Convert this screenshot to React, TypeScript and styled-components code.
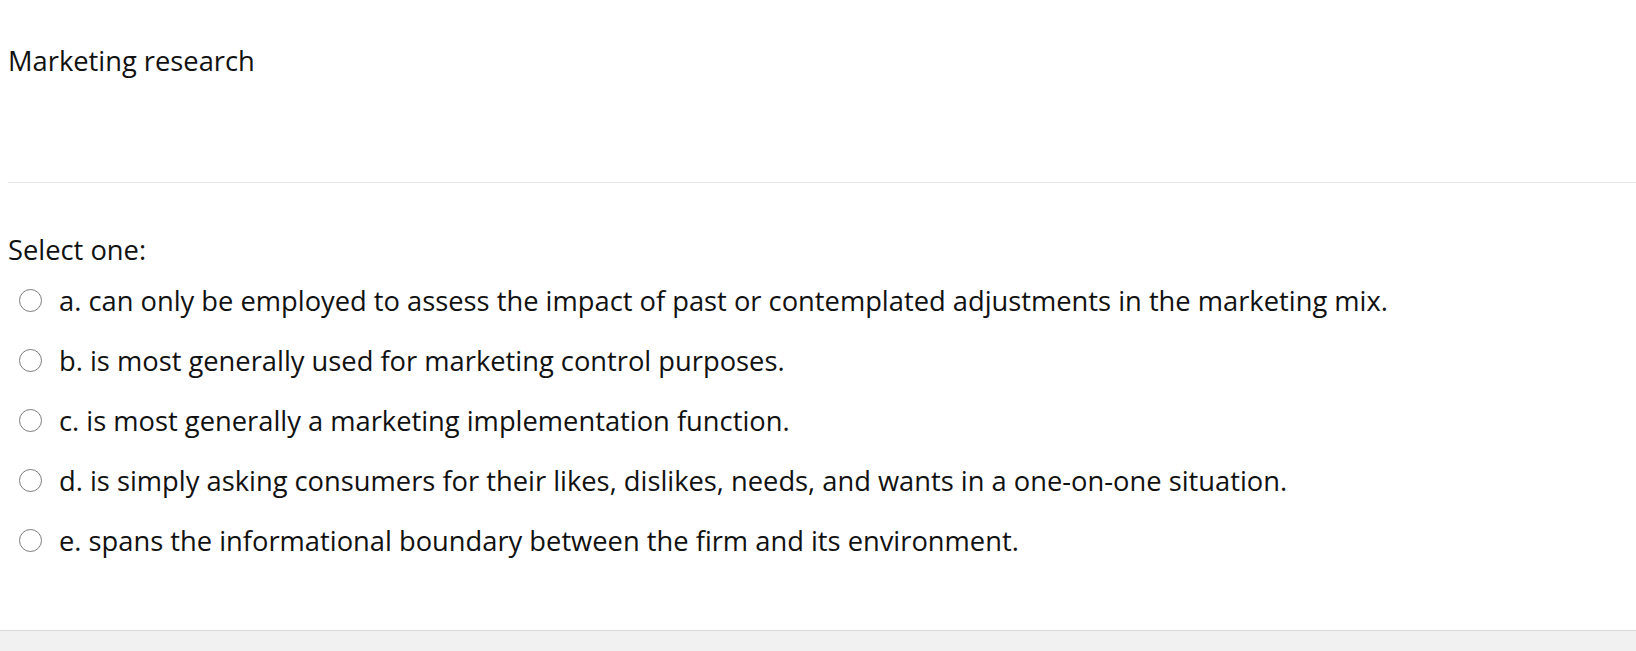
import React from "react";
import styled, { createGlobalStyle } from "styled-components";

const GlobalStyle = createGlobalStyle`
  html, body {
    margin: 0;
    padding: 0;
    background: #f1f1f1;
  }
  body {
    font-family: "Open Sans", "Noto Sans", sans-serif;
    color: #111;
  }
`;

const Page = styled.div`
  display: flex;
  flex-direction: column;
  min-height: 651px;
`;

const Card = styled.main`
  background: #fff;
  height: 631px;
  padding-left: 8px;
  box-sizing: border-box;
  border-bottom: 1px solid #dadada;
`;

const QuestionText = styled.div`
  font-size: 27.3px;
  line-height: 40.8px;
  padding-top: 41px;
  height: 183px;
  box-sizing: border-box;
  border-bottom: 1px solid #e8e8e8;
`;

const Answer = styled.fieldset`
  border: 0;
  margin: 0;
  padding: 47px 0 0;
  font-size: 27.3px;
  line-height: 40.8px;
`;

const Prompt = styled.legend`
  padding: 0;
  float: left;
  width: 100%;
  height: 40.8px;
  margin-bottom: 10.2px;
`;

const Options = styled.div`
  clear: both;
  display: flex;
  flex-direction: column;
  gap: 19.2px;
`;

const Option = styled.label`
  display: flex;
  align-items: center;
  height: 40.8px;
  cursor: pointer;
`;

const Radio = styled.span`
  width: 23px;
  height: 23px;
  box-sizing: border-box;
  border: 1.5px solid #7d7d7d;
  border-radius: 50%;
  background: #fff;
  margin: 0 17px 2px 11px;
  flex-shrink: 0;
`;

const Footer = styled.footer`
  flex: 1;
  background: #f1f1f1;
`;

const options = [
  "a. can only be employed to assess the impact of past or contemplated adjustments in the marketing mix.",
  "b. is most generally used for marketing control purposes.",
  "c. is most generally a marketing implementation function.",
  "d. is simply asking consumers for their likes, dislikes, needs, and wants in a one-on-one situation.",
  "e. spans the informational boundary between the firm and its environment.",
];

export default function App() {
  return (
    <Page>
      <GlobalStyle />
      <Card>
        <QuestionText>Marketing research</QuestionText>
        <Answer>
          <Prompt>Select one:</Prompt>
          <Options>
            {options.map((o) => (
              <Option key={o}>
                <Radio />
                {o}
              </Option>
            ))}
          </Options>
        </Answer>
      </Card>
      <Footer />
    </Page>
  );
}
